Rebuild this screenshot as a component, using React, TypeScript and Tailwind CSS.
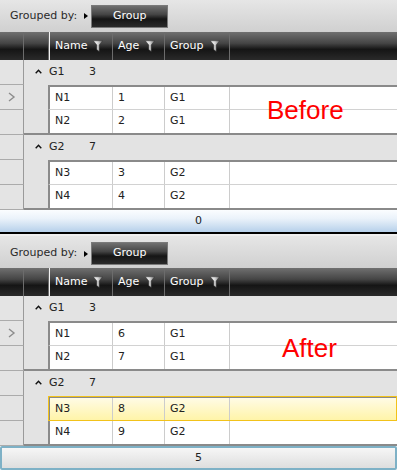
import React from 'react';

type Row = { name: string; age: number; group: string };

interface PanelProps {
  label: string;
  labelPos: string;
  values: number[];
  footer: string;
  variant: 'before' | 'after';
}

const headerBg =
  'bg-[linear-gradient(to_bottom,#707070,#454545_40%,#151515_62%,#2a2a2a)]';

function FilterIcon() {
  return (
    <svg width="10" height="12" viewBox="0 0 10 12">
      <defs>
        <linearGradient id="funnel" x1="0" x2="1" y1="0" y2="0">
          <stop offset="0" stopColor="#ffffff" />
          <stop offset="0.5" stopColor="#d8d8d8" />
          <stop offset="1" stopColor="#707070" />
        </linearGradient>
      </defs>
      <path
        d="M0.4 0.8 H9.6 L6.2 5 V11.4 L3.8 9.6 V5 Z"
        fill="url(#funnel)"
        stroke="#333"
        strokeWidth="0.5"
      />
    </svg>
  );
}

function Caret() {
  return (
    <svg width="7" height="5" viewBox="0 0 7 5">
      <path d="M0.7 4.3 L3.5 1.3 L6.3 4.3" fill="none" stroke="#111" strokeWidth="1.4" />
    </svg>
  );
}

function Chevron() {
  return (
    <svg width="8" height="10" viewBox="0 0 8 10">
      <path d="M1 1 L6 5 L1 9" fill="none" stroke="#8c8c8c" strokeWidth="1.4" />
    </svg>
  );
}

function Indicator({ current }: { current?: boolean }) {
  return (
    <div className="w-[24px] h-full shrink-0 bg-[#e4e4e4] border-r border-b border-r-[#9a9a9a] border-b-[#ababab] flex items-center pl-[8px]">
      {current && <Chevron />}
    </div>
  );
}

function GroupHeader({ name, count }: { name: string; count: number }) {
  return (
    <div className="flex h-[25px]">
      <Indicator />
      <div className="flex-1 bg-[#e3e3e3] flex items-center pl-[11px]">
        <div className="w-[14px] pb-[2px]">
          <Caret />
        </div>
        <span className="w-[40px]">{name}</span>
        <span>{count}</span>
      </div>
    </div>
  );
}

function DataRow({
  row,
  first,
  last,
  current,
  selected,
}: {
  row: Row;
  first?: boolean;
  last?: boolean;
  current?: boolean;
  selected?: boolean;
}) {
  return (
    <div className="flex h-[25px]">
      <Indicator current={current} />
      <div
        className={
          'flex-1 flex bg-[#e3e3e3] ' + (last ? 'border-b-2 border-[#8a8a8a]' : '')
        }
      >
        <div className="w-[24px] shrink-0" />
        <div
          className={
            'flex-1 flex border-l-2 border-l-[#8a8a8a] ' +
            (first ? 'border-t-2 border-t-[#8a8a8a] ' : '') +
            (selected
              ? 'bg-[linear-gradient(to_bottom,#fffbe6,#fff4a8)] outline outline-1 -outline-offset-1 outline-[#f2c21a] '
              : 'bg-white ') +
            (last ? '' : 'border-b border-b-[#d2d2d2]')
          }
        >
          <div className="w-[63px] border-r border-[#cccccc] flex items-center pl-[5px]">
            {row.name}
          </div>
          <div className="w-[52px] border-r border-[#cccccc] flex items-center pl-[5px]">
            {row.age}
          </div>
          <div className="w-[65px] border-r border-[#cccccc] flex items-center pl-[5px]">
            {row.group}
          </div>
          <div className="flex-1" />
        </div>
      </div>
    </div>
  );
}

function HeaderCell({ label, width }: { label: string; width: string }) {
  return (
    <div
      className={
        width +
        ' h-full border-r border-[#6c6c6c] flex items-center justify-between pl-[5px] pr-[9px] text-white'
      }
    >
      <span>{label}</span>
      <FilterIcon />
    </div>
  );
}

function Panel({ label, labelPos, values, footer, variant }: PanelProps) {
  const rows: Row[] = [
    { name: 'N1', age: values[0], group: 'G1' },
    { name: 'N2', age: values[1], group: 'G1' },
    { name: 'N3', age: values[2], group: 'G2' },
    { name: 'N4', age: values[3], group: 'G2' },
  ];
  const after = variant === 'after';

  return (
    <div className="relative">
      {/* grouping panel */}
      <div
        className={
          'flex items-center pl-[10px] bg-[linear-gradient(to_bottom,#e6e6e6,#d0d0d0)] ' +
          (after ? 'h-[34px] pt-[3px] border-t-2 border-[#efefef]' : 'h-[32px]')
        }
      >
        <span className="text-[#2a2a2a]">Grouped by:</span>
        <span className="ml-[7px] w-0 h-0 border-y-[3.5px] border-y-transparent border-l-[4px] border-l-black" />
        <div
          className={
            'ml-[3px] w-[77px] h-[23px] border border-[#7a7a7a] flex items-center justify-center text-white ' +
            headerBg
          }
        >
          Group
        </div>
      </div>

      {/* column header */}
      <div className={'flex h-[28px] ' + headerBg}>
        <div className="w-[24px] h-full border-r border-[#6c6c6c]" />
        <div className="w-[25px] h-full border-r border-[#6c6c6c]" />
        <div className="w-[1px] h-full bg-[#f2f2f2]" />
        <HeaderCell label="Name" width="w-[63px]" />
        <HeaderCell label="Age" width="w-[52px]" />
        <HeaderCell label="Group" width="w-[65px]" />
        <div className="flex-1" />
      </div>

      <GroupHeader name="G1" count={3} />
      <DataRow row={rows[0]} first current />
      <DataRow row={rows[1]} last />
      <GroupHeader name="G2" count={7} />
      <DataRow row={rows[2]} first selected={after} />
      <DataRow row={rows[3]} last />

      {after ? (
        <div className="h-[24px] border-2 border-[#7eb1c6] rounded-[2px] bg-[linear-gradient(to_bottom,#f6f6f6,#dedede)] flex items-center justify-center">
          {footer}
        </div>
      ) : (
        <div className="h-[22px] bg-[linear-gradient(to_bottom,#fbfdff,#eaf2fa_40%,#b6d0ea)] flex items-center justify-center">
          {footer}
        </div>
      )}

      <div
        className={
          'absolute text-[26px] leading-none text-[#ff0000] font-["Liberation_Sans",Arial,sans-serif] ' +
          labelPos
        }
      >
        {label}
      </div>
    </div>
  );
}

export default function App() {
  return (
    <div className="w-[397px] h-[470px] overflow-hidden bg-white text-[11px] text-[#222] font-['DejaVu_Sans',sans-serif]">
      <Panel
        label="Before"
        labelPos="left-[267px] top-[97px]"
        values={[1, 2, 3, 4]}
        footer="0"
        variant="before"
      />
      <div className="h-[2px] bg-black" />
      <Panel
        label="After"
        labelPos="left-[282px] top-[101px]"
        values={[6, 7, 8, 9]}
        footer="5"
        variant="after"
      />
    </div>
  );
}
